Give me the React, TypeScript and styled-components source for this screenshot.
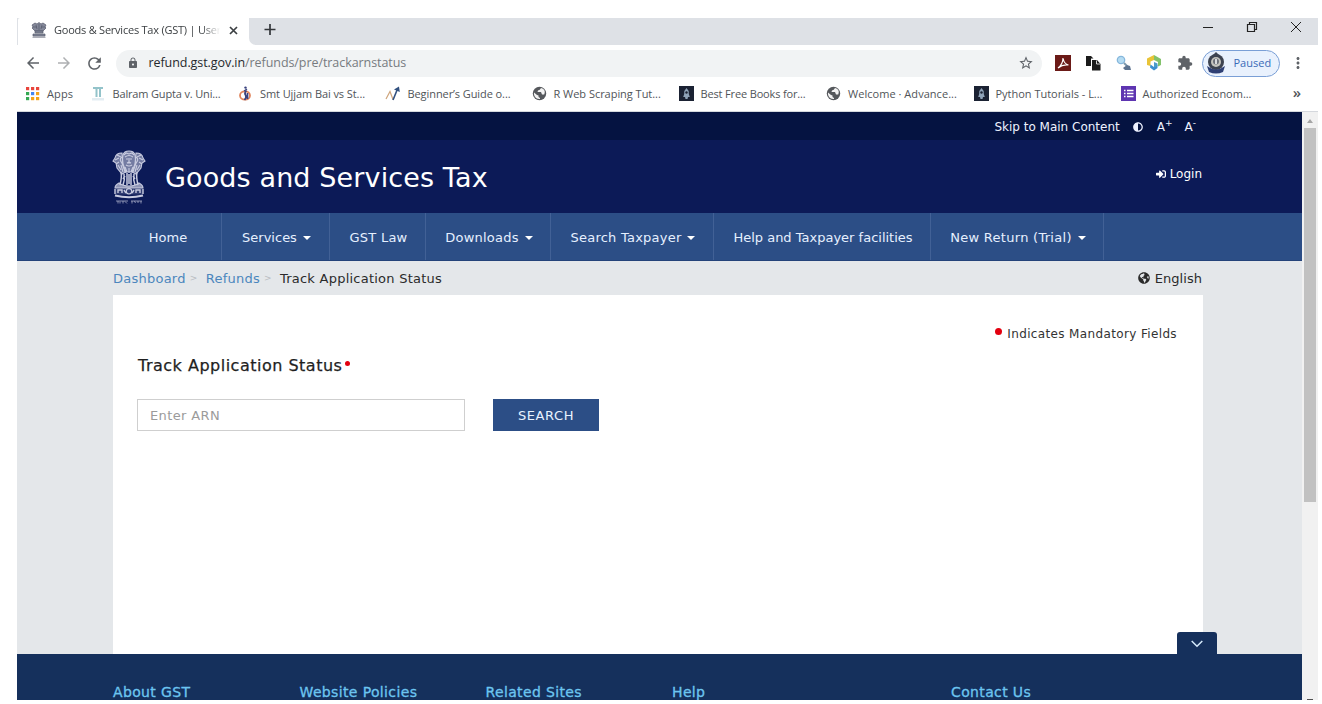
import React from 'react';
import styled, { createGlobalStyle } from 'styled-components';
import { FaAdjust, FaSignInAlt, FaGlobeAmericas } from 'react-icons/fa';
import { MdArrowBack, MdArrowForward, MdRefresh, MdLock, MdStarBorder, MdExtension, MdMoreVert } from 'react-icons/md';

const ui = `"Open Sans", "Noto Sans", sans-serif`;
const body = `"DejaVu Sans", Verdana, sans-serif`;

const GlobalStyle = createGlobalStyle`
  * { box-sizing: border-box; }
  body { margin: 0; background: #fff; }
  #root { height: 704px; overflow: hidden; }
`;

const Browser = styled.div`
  margin: 18px 0 0 17px;
  width: 1301px;
  height: 682px;
  overflow: hidden;
  display: flex;
  flex-direction: column;
  font-family: ${ui};
`;

/* ---------- window chrome ---------- */
const TabStrip = styled.header`
  display: flex;
  height: 27px;
  flex: none;
  background: #dee1e6;
`;
const Tab = styled.div`
  display: flex;
  align-items: center;
  width: 231px;
  margin-left: 1px;
  padding: 0 7px 3px 13px;
  background: #fff;
  border-radius: 2px 0 0 0;
`;
const StripRest = styled.div`
  display: flex;
  flex: 1;
  background: #dee1e6;
  border-bottom-left-radius: 7px;
`;
const StripBase = styled.div`
  display: flex;
  flex: 1;
  background: #fff;
`;
const TabTitle = styled.span`
  margin-left: 7px;
  width: 168px;
  overflow: hidden;
  white-space: nowrap;
  font-size: 11px;
  letter-spacing: -0.23px;
  line-height: 20px;
  color: #3c4043;
  mask-image: linear-gradient(90deg, #000 88%, transparent 99%);
`;
const TabClose = styled.svg`
  margin-left: 7px;
  flex: none;
`;
const NewTab = styled.svg`
  margin: 5px 0 0 15px;
`;
const WindowControls = styled.svg`
  margin-left: auto;
`;

const Toolbar = styled.div`
  display: flex;
  align-items: center;
  flex: none;
  height: 36px;
  padding: 0 11px 0 7px;
  color: #5f6368;
`;
const NavButton = styled.span<{ $dim?: boolean }>`
  display: flex;
  flex: none;
  width: 30.5px;
  opacity: ${(p) => (p.$dim ? 0.5 : 1)};
`;
const Omnibox = styled.div`
  display: flex;
  align-items: center;
  flex: none;
  width: 926px;
  height: 27px;
  padding: 0 8px 0 11px;
  background: #f1f3f4;
  border-radius: 14px;
`;
const Url = styled.span`
  margin-left: 10px;
  font-size: 12.5px;
  letter-spacing: -0.07px;
  line-height: 22px;
  color: #777b80;
  flex: 1;
`;
const Host = styled.span`
  color: #25282c;
`;
const Extensions = styled.div`
  display: flex;
  align-items: center;
  flex: none;
  gap: 14.500px;
  margin-left: 13px;
`;
const Profile = styled.div`
  display: flex;
  align-items: center;
  flex: none;
  width: 78px;
  height: 27px;
  margin: 0 9px 0 9px;
  padding-left: 3px;
  gap: 8px;
  border: 1px solid #7a9fd6;
  border-radius: 14px;
  background: #e9f1fd;
  font-size: 11px;
  line-height: 18px;
  color: #3a6bb8;
`;

const Bookmarks = styled.nav`
  display: flex;
  align-items: center;
  flex: none;
  height: 31px;
  padding: 0 0 5px 8px;
  border-bottom: 1px solid #d5d8dd;
`;
const Bookmark = styled.a<{ $w: number; $ls?: number }>`
  display: flex;
  align-items: center;
  flex: none;
  width: ${(p) => p.$w}px;
  gap: 7px;
  font-size: 11px;
  line-height: 20px;
  letter-spacing: ${(p) => p.$ls ?? 0}px;
  white-space: nowrap;
  color: #505458;
`;
const More = styled.span`
  margin-left: auto;
  padding: 0 17px 3px 0;
  font-size: 15px;
  font-weight: 600;
  line-height: 20px;
  color: #505458;
`;

/* ---------- page ---------- */
const Viewport = styled.div`
  display: flex;
  flex: 1;
  min-height: 0;
  font-family: ${body};
`;
const Page = styled.div`
  display: flex;
  flex-direction: column;
  width: 1285px;
  background: #e4e7ea;
`;
const TopBar = styled.div`
  display: flex;
  align-items: center;
  justify-content: flex-end;
  flex: none;
  height: 28px;
  padding: 1px 106px 0 0;
  background: #051341;
  font-size: 12px;
  color: #eef2ff;
`;
const TopItem = styled.span<{ $gap?: number }>`
  display: flex;
  margin-left: ${(p) => p.$gap ?? 0}px;
  sup {
    font-size: 9px;
    line-height: 9px;
    margin-top: -1px;
  }
`;
const Masthead = styled.div`
  display: flex;
  flex: none;
  height: 73px;
  padding: 10px 100px 0 95px;
  background: #0c1a57;
  color: #fff;
`;
const SiteTitle = styled.h1`
  margin: 10px 0 0 19px;
  font-size: 27px;
  font-weight: 400;
  line-height: 36px;
  letter-spacing: 0.12px;
`;
const Login = styled.a`
  display: flex;
  align-items: center;
  gap: 4px;
  height: 16px;
  margin: 16px 0 0 auto;
  font-size: 12px;
`;
const MainNav = styled.nav`
  display: flex;
  flex: none;
  height: 48px;
  padding-left: 96px;
  background: #2c4e86;
  border-bottom: 1px solid #24437a;
`;
const NavItem = styled.a<{ $w: number; $ls?: number }>`
  display: flex;
  align-items: center;
  justify-content: center;
  width: ${(p) => p.$w}px;
  padding: 1px 0 0 2px;
  border-right: 1px solid #426196;
  font-size: 13px;
  letter-spacing: ${(p) => p.$ls ?? 0}px;
  white-space: nowrap;
  color: #e6f0ff;
`;
const Caret = styled.i`
  margin: 1px 0 0 6px;
  border: 4px solid transparent;
  border-top-color: #fff;
  border-bottom: 0;
`;
const CrumbBar = styled.div`
  display: flex;
  align-items: center;
  flex: none;
  height: 34px;
  padding: 0 100px 0 96px;
  font-size: 13px;
  letter-spacing: 0.24px;
  color: #2b2b2b;
`;
const CrumbLink = styled.a`
  color: #4b86bd;
`;
const CrumbSep = styled.span<{ $w: number }>`
  width: ${(p) => p.$w}px;
  padding-left: 4px;
  font-size: 9px;
  color: #b9bdc2;
`;
const Language = styled.span`
  display: flex;
  align-items: center;
  gap: 5px;
  margin-left: auto;
  letter-spacing: 0.05px;
`;
const Card = styled.main`
  flex: none;
  width: 1090px;
  height: 359px;
  margin-left: 96px;
  padding: 30px 26px 0 24px;
  background: #fff;
`;
const Dot = styled.i<{ $size: number }>`
  width: ${(p) => p.$size}px;
  height: ${(p) => p.$size}px;
  border-radius: 50%;
  background: #e3000f;
`;
const Mandatory = styled.p`
  display: flex;
  justify-content: flex-end;
  margin: 0;
  gap: 5px;
  font-size: 12px;
  letter-spacing: 0.36px;
  line-height: 19px;
  color: #333;
  ${Dot} { margin-top: 3px; }
`;
const FieldLabel = styled.label`
  display: flex;
  margin-top: 12px;
  padding-left: 1px;
  gap: 3px;
  font-size: 16px;
  letter-spacing: 0.5px;
  line-height: 20px;
  color: #1f1f1f;
  -webkit-text-stroke: 0.25px #1f1f1f;
  ${Dot} { margin-top: 5px; }
`;
const SearchRow = styled.div`
  display: flex;
  gap: 28px;
  margin-top: 23px;
`;
const ArnInput = styled.input`
  width: 328px;
  height: 32px;
  padding: 1px 12px 0;
  border: 1px solid #cfcfcf;
  font: 13px ${body};
  letter-spacing: 0.37px;
  &::placeholder { color: #9b9b9b; opacity: 1; }
`;
const SearchButton = styled.button`
  width: 106px;
  height: 32px;
  padding: 0;
  border: 0;
  background: #2c4e86;
  color: #e9f3ff;
  font: 13px ${body};
  letter-spacing: 0.6px;
`;
const Footer = styled.footer`
  position: relative;
  display: flex;
  flex: 1;
  padding: 29px 0 0 96px;
  background: #15305c;
`;
const FooterTitle = styled.h2<{ $w: number }>`
  margin: 0;
  width: ${(p) => p.$w}px;
  font-size: 14px;
  font-weight: 400;
  letter-spacing: 0.36px;
  line-height: 18px;
  color: #6cc5f0;
  -webkit-text-stroke: 0.3px #6cc5f0;
`;
const CollapseTab = styled.button`
  position: absolute;
  top: -22px;
  right: 85px;
  display: flex;
  align-items: center;
  justify-content: center;
  width: 40px;
  height: 23px;
  padding: 0;
  border: 0;
  border-radius: 3px 3px 0 0;
  background: #15305c;
`;
const Scrollbar = styled.div`
  display: flex;
  flex-direction: column;
  width: 16px;
  padding-left: 2px;
  background: #f1f1f1;
`;
const ScrollArrow = styled.svg`
  flex: none;
`;
const ScrollThumb = styled.div`
  width: 12px;
  height: 374px;
  background: #c1c1c1;
`;
const ScrollEnd = styled.svg`
  margin-top: auto;
`;

/* ---------- drawings ---------- */
const Emblem = () => (
  <svg width="34" height="54" viewBox="0 0 34 54" fill="none" stroke="#c9cce0" strokeWidth="1.1">
    <g fill="#c9cce0" fillOpacity=".55">
      <path d="M11 5Q12 1 17 1t6 4l1 8-3 9h-8l-3-9z" />
      <path d="M10 3Q4 3 3 8l-2 3 3 2 1 5 5 6 4-2-3-8z" />
      <path d="M24 3q6 0 7 5l2 3-3 2-1 5-5 6-4-2 3-8z" />
    </g>
    <path d="M12 5l2-2 3 1 3-1 2 2M13 7q4-3 8 0M14 9h2m2 0h2M17 8v4l-2 1h4l-2-1M14 15q3 2 6 0M3 10l4-2m0 4l-3 2M31 10l-4-2m0 4l3 2M10 7q-4 3 1 7M24 7q4 3-1 7M9 15l2 7M25 15l-2 7M13 17l2 5m2-4v5m4-6l-2 5M6 15l3 5m19-5l-3 5M5 5l4 2M29 5l-4 2" />
    <path d="M9 22q1 5-1 13M12 24q1 6-1 11M15 23v12M19 23v12M22 24q-1 6 1 11M25 22q-1 5 1 13M13 26l-2 3M21 26l2 3M17 24v10" strokeWidth="1.5" />
    <path d="M7 33q-4 2-4 5h28q0-3-4-5-4 3-10 3t-10-3z" fill="#c9cce0" fillOpacity=".7" />
    <path d="M3 38.500h28v6H3z" fill="#c9cce0" fillOpacity=".2" stroke="none" />
    <circle cx="17" cy="41.300" r="2.700" />
    <path d="M6 43v-3h4v3M12 40l2 3M24 43v-3h4v3M22 40l-2 3M3 39v5M31 39v5" strokeWidth="1.4" />
    <path d="M3 45.500q14 3.500 28 0" strokeWidth="2" />
    <g strokeWidth=".8" opacity=".8">
      <path d="M4 51h12M19 51h11M6 51v2.500m2-2v2m3-2.500v2.500m2-2l2 2m5-2.500v2.500m2-2l2 1m2-1.500v2m3-2v2.500" />
    </g>
  </svg>
);
const EmblemMark = () => (
  <svg width="16" height="16" viewBox="0 0 16 16" fill="#85899a" stroke="#55596b" strokeWidth=".7">
    <path d="M1 3l3-2 2 1 2-1.500L10 2l2-1 3 2-1 2 1 1-3 3H4L1 6l1-1z" />
    <path d="M5 3l1 4M8 2v6M11 3l-1 4M2 5h4m4 0h4" />
    <path d="M4 9h8v2H4zM2 12h12v2H2zM1.500 15.200h13" />
  </svg>
);
const Rocket = () => (
  <svg width="15" height="15" viewBox="0 0 15 15">
    <path fill="#1b2233" d="M0 0h15v15H0z" />
    <path fill="#8fa3b8" d="M7.500 2Q10 4 9.800 8l1 3H9l-.5 2h-2L6 11H4.200l1-3Q5 4 7.500 2z" />
    <circle cx="7.500" cy="6.500" r="1.200" fill="#1b2233" />
  </svg>
);
const AppsGrid = () => {
  const colors = ['#e8453c', '#e8453c', '#e8453c', '#34a853', '#4285f4', '#f4a21a', '#34a853', '#f4a21a', '#f4a21a'];
  return (
    <svg width="15" height="15">
      {colors.map((c, i) => (
        <rect key={i} x={1 + (i % 3) * 5} y={1 + Math.floor(i / 3) * 5} width="3.200" height="3.200" fill={c} />
      ))}
    </svg>
  );
};
const Pillar = () => (
  <svg width="15" height="15" viewBox="0 0 15 15">
    <path d="M2 1h10v2H2zM4.500 3h2v8h-2zM8 3h2v8H8z" fill="#93c3ca" />
    <path d="M1 12h12v2.500H1z" fill="#e3edf2" />
  </svg>
);
const KanoonMark = () => (
  <svg width="15" height="15" viewBox="0 0 15 15" fill="none">
    <ellipse cx="7" cy="9.500" rx="5" ry="4.200" stroke="#e0835a" strokeWidth="1.800" />
    <path d="M8.500 4.500Q6 7 7.500 9t-1 5M9.500 7v6" stroke="#39427e" strokeWidth="1.700" />
    <path d="M6 5l3-2" stroke="#39427e" strokeWidth="1.300" />
    <circle cx="7.500" cy="1.600" r="1.200" fill="#39427e" />
  </svg>
);
const ChartMark = () => (
  <svg width="16" height="15" viewBox="0 0 16 15" fill="none">
    <path d="M1 13L5 5.500l3 8" stroke="#cfa57c" strokeWidth="1.200" />
    <path d="M8 14L12.500 3" stroke="#31507f" strokeWidth="1.600" />
    <path d="M9 3.500L14 .5l.8 5.500z" fill="#31507f" />
  </svg>
);
const FormMark = () => (
  <svg width="15" height="15">
    <path fill="#5e35b1" d="M0 0h15v15H0z" />
    <path stroke="#fff" strokeWidth="1.500" d="M3 4.500h1.500M6 4.500h6.500M3 7.500h1.500M6 7.500h6.500M3 10.500h1.500M6 10.500h6.500" />
  </svg>
);
const Globe = () => (
  <svg width="15" height="15" viewBox="0 0 15 15">
    <circle cx="7.500" cy="7.500" r="6.700" fill="#55585c" />
    <path d="M9 2q-1 2-3 2.500L5.500 6H9l1 2.500h2.200Q13.500 5 11.800 3.400 10.500 2.200 9 2z" fill="#f3f3f3" />
    <path d="M2 6.500L5 9l1.500.5v1.500l1.500 1v1Q4 13.300 2.500 10 1.700 8 2 6.500z" fill="#f3f3f3" />
  </svg>
);

const bookmarks: [string, number, number, React.ReactNode][] = [
  ['Apps', 65.5, 0.1, <AppsGrid />],
  ['Balram Gupta v. Uni...', 147.5, -0.16, <Pillar />],
  ['Smt Ujjam Bai vs St...', 146.5, -0.08, <KanoonMark />],
  ['Beginner’s Guide o...', 147, -0.08, <ChartMark />],
  ['R Web Scraping Tut...', 147, -0.03, <Globe />],
  ['Best Free Books for...', 147.5, -0.15, <Rocket />],
  ['Welcome · Advance...', 147.5, 0.04, <Globe />],
  ['Python Tutorials - L...', 147, -0.02, <Rocket />],
  ['Authorized Econom...', 140, -0.02, <FormMark />],
];
const navItems: [string, number, number, boolean][] = [
  ['Home', 109, 0, false],
  ['Services', 108, 0, true],
  ['GST Law', 96, 0.25, false],
  ['Downloads', 125, 0.22, true],
  ['Search Taxpayer', 163, 0.23, true],
  ['Help and Taxpayer facilities', 217, 0, false],
  ['New Return (Trial)', 173, 0.28, true],
];
const footerTitles: [string, number][] = [
  ['About GST', 186.5],
  ['Website Policies', 186],
  ['Related Sites', 186.5],
  ['Help', 279],
  ['Contact Us', 120],
];

export default function App() {
  return (
    <>
      <GlobalStyle />
      <Browser>
        <TabStrip>
          <Tab>
            <EmblemMark />
            <TabTitle>Goods &amp; Services Tax (GST) | User</TabTitle>
            <TabClose width="9" height="9" viewBox="0 0 9 9">
              <path d="M1 1l7 7M8 1l-7 7" stroke="#3c4043" strokeWidth="1.700" />
            </TabClose>
          </Tab>
          <StripBase>
            <StripRest>
              <NewTab width="12" height="13" viewBox="0 0 12 13">
                <path d="M6 1v11M.5 6.500h11" stroke="#33363a" strokeWidth="1.700" />
              </NewTab>
              <WindowControls width="120" height="20" fill="none" stroke="#222">
                <path d="M5 9.500h10" />
                <path d="M49.500 6.500h7v7h-7zM51.500 6.500v-2h7v7h-2" strokeWidth="1.200" />
                <path d="M93 4l10 10M103 4l-10 10" />
              </WindowControls>
            </StripRest>
          </StripBase>
        </TabStrip>

        <Toolbar>
          <NavButton><MdArrowBack size={18} /></NavButton>
          <NavButton $dim><MdArrowForward size={18} /></NavButton>
          <NavButton><MdRefresh size={19} /></NavButton>
          <Omnibox>
            <MdLock size={12} />
            <Url><Host>refund.gst.gov.in</Host>/refunds/pre/trackarnstatus</Url>
            <MdStarBorder size={16} />
          </Omnibox>
          <Extensions>
            <svg width="16" height="16" viewBox="0 0 16 16">
              <path fill="#6b1a17" d="M0 0h16v16H0z" />
              <path d="M3 13q5-4 5-10 1 6 5.500 7Q8 9 3 13z" fill="none" stroke="#fff" strokeWidth="1.200" />
            </svg>
            <svg width="16" height="16" viewBox="0 0 16 16" fill="#1b1b1b">
              <path d="M1 1h5l2.500 2.500H6V11H1z" />
              <path d="M7 5h5l3.500 4v6.500H7z" />
              <path d="M11.500 5.500V9H15" stroke="#fff" fill="none" strokeWidth=".8" />
            </svg>
            <svg width="16" height="16" viewBox="0 0 16 16">
              <circle cx="5" cy="5" r="3.700" fill="#b5dcf2" stroke="#86b7dc" strokeWidth="1.300" />
              <path d="M8 8l3 3" stroke="#7e99ad" strokeWidth="2" />
              <path d="M7 13l4-3 3 1 1 4H9z" fill="#5d7490" />
            </svg>
            <svg width="16" height="16" viewBox="0 0 16 16">
              <path d="M8 0L1 3.500V10l3.500 1V6.500L8 5z" fill="#e9c437" />
              <path d="M8 0l7 4v6l-3 1.500V7L8 5z" fill="#83c26b" />
              <path d="M4.500 9.500L8 12l3.500-2v3L8 15.500l-4-3z" fill="#3a8fd0" />
              <path d="M8 7l3.500 1.500V11L8 12.500z" fill="#4a9bc9" />
            </svg>
            <MdExtension size={16} />
          </Extensions>
          <Profile>
            <svg width="20" height="22" viewBox="0 0 20 22">
              <circle cx="10" cy="10" r="8" fill="#3d4350" />
              <path d="M7 3l3-3 3 3z" fill="#3d4350" />
              <circle cx="10" cy="10" r="5" fill="#c5c4bd" />
              <circle cx="10" cy="9.500" r="3" fill="#6d7078" />
              <path d="M10 7v5" stroke="#fff" strokeWidth="1.500" />
              <path d="M1 14q9 7 18 0l-2 6q-7 3-14 0z" fill="#2e3f74" />
            </svg>
            Paused
          </Profile>
          <MdMoreVert size={18} />
        </Toolbar>

        <Bookmarks>
          {bookmarks.map(([label, w, ls, icon]) => (
            <Bookmark key={label} $w={w} $ls={ls}>{icon}{label}</Bookmark>
          ))}
          <More>»</More>
        </Bookmarks>

        <Viewport>
          <Page>
            <TopBar>
              <TopItem>Skip to Main Content</TopItem>
              <TopItem $gap={13}><FaAdjust size={10} /></TopItem>
              <TopItem $gap={14}>A<sup>+</sup></TopItem>
              <TopItem $gap={12}>A<sup>-</sup></TopItem>
            </TopBar>
            <Masthead>
              <Emblem />
              <SiteTitle>Goods and Services Tax</SiteTitle>
              <Login><FaSignInAlt size={10} />Login</Login>
            </Masthead>
            <MainNav>
              {navItems.map(([label, w, ls, menu]) => (
                <NavItem key={label} $w={w} $ls={ls}>{label}{menu && <Caret />}</NavItem>
              ))}
            </MainNav>
            <CrumbBar>
              <CrumbLink>Dashboard</CrumbLink>
              <CrumbSep $w={20}>&gt;</CrumbSep>
              <CrumbLink>Refunds</CrumbLink>
              <CrumbSep $w={20}>&gt;</CrumbSep>
              <span>Track Application Status</span>
              <Language><FaGlobeAmericas size={12} />English</Language>
            </CrumbBar>
            <Card>
              <Mandatory><Dot $size={7} />Indicates Mandatory Fields</Mandatory>
              <FieldLabel htmlFor="arn">Track Application Status<Dot $size={5} /></FieldLabel>
              <SearchRow>
                <ArnInput id="arn" placeholder="Enter ARN" />
                <SearchButton>SEARCH</SearchButton>
              </SearchRow>
            </Card>
            <Footer>
              {footerTitles.map(([label, w]) => (
                <FooterTitle key={label} $w={w}>{label}</FooterTitle>
              ))}
              <CollapseTab>
                <svg width="12" height="8" viewBox="0 0 12 8">
                  <path d="M.7 1L6 6.300 11.300 1" fill="none" stroke="#d6eafc" strokeWidth="1.500" />
                </svg>
              </CollapseTab>
            </Footer>
          </Page>
          <Scrollbar>
            <ScrollArrow width="12" height="16"><path d="M3 11l3-4 3 4z" fill="#a5a5a5" /></ScrollArrow>
            <ScrollThumb />
            <ScrollEnd width="12" height="2"><path d="M3 1h6v1H3z" fill="#505050" /></ScrollEnd>
          </Scrollbar>
        </Viewport>
      </Browser>
    </>
  );
}
